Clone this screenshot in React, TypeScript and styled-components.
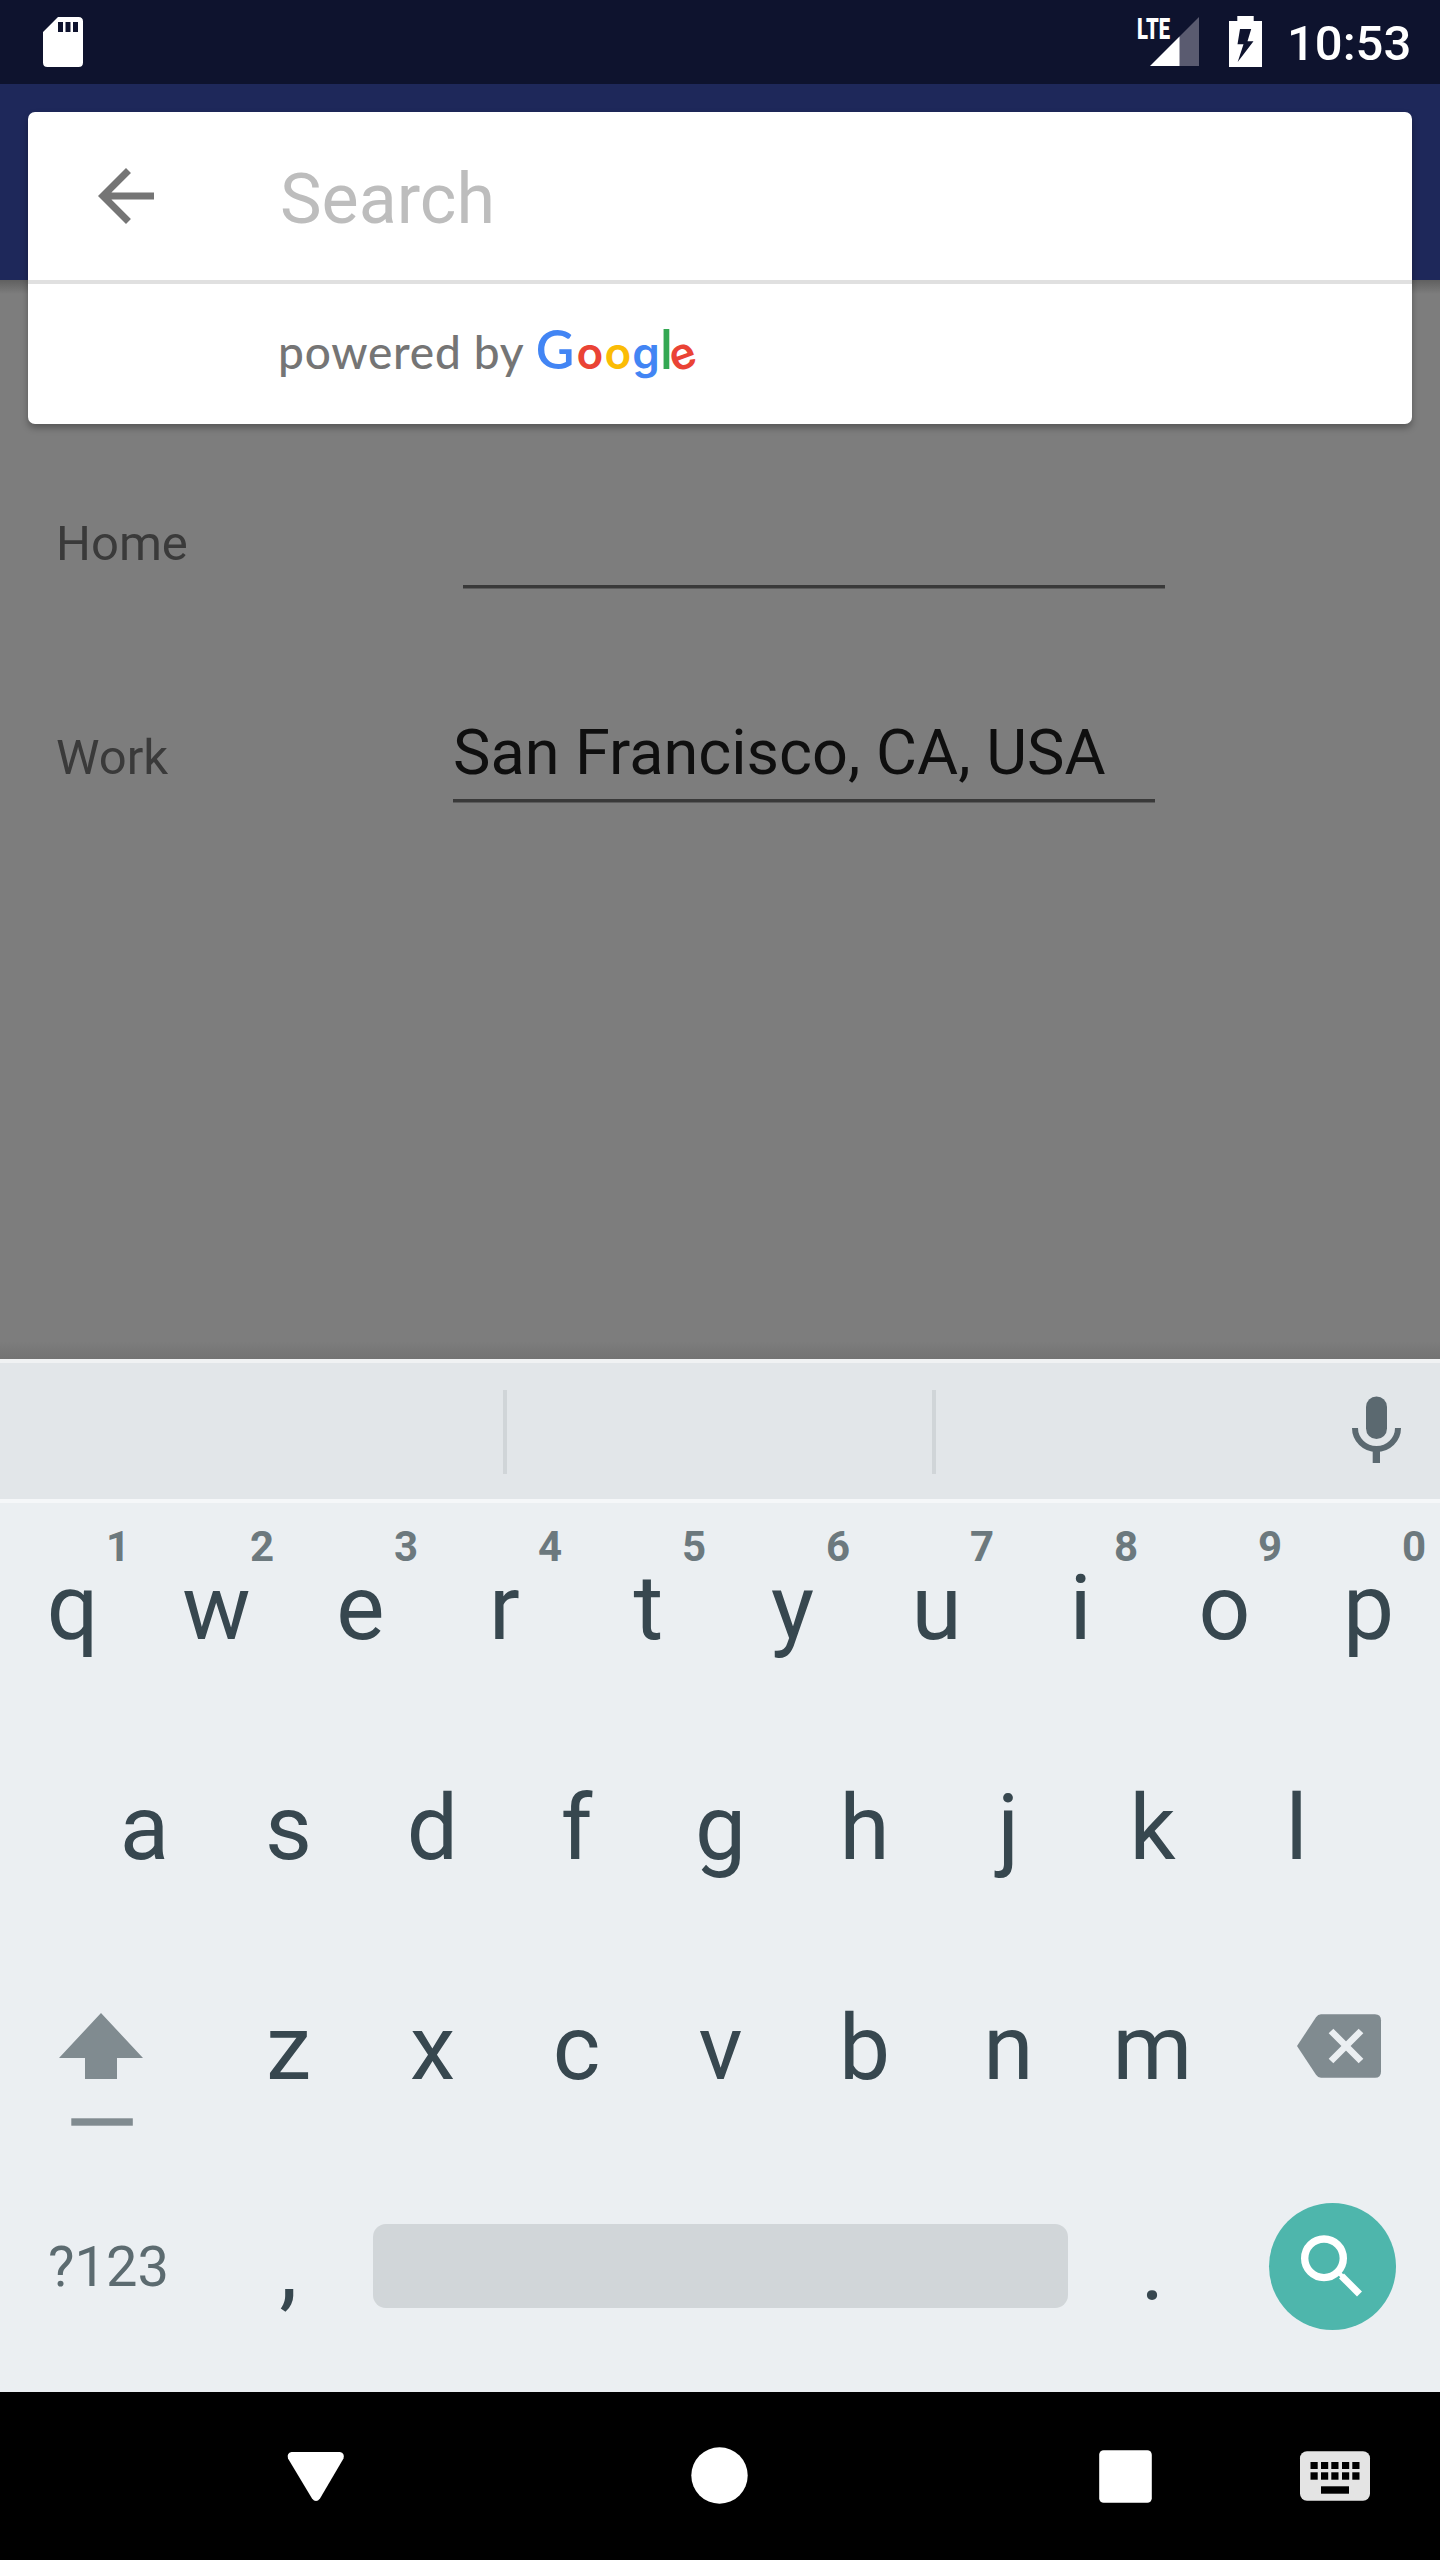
import React from "react";
import styled, { createGlobalStyle } from "styled-components";

const GlobalStyle = createGlobalStyle`
  * { box-sizing: border-box; }
  body { margin: 0; background: #000; font-family: Roboto, "Noto Sans", sans-serif; }
  svg { display: block; flex: none; overflow: visible; }
`;

const Screen = styled.div`
  position: relative;
  width: 1440px;
  height: 2560px;
  display: flex;
  flex-direction: column;
  overflow: hidden;
  background: #7d7d7d;
`;

const StatusBar = styled.header`
  height: 84px;
  flex: none;
  display: flex;
  align-items: flex-start;
  justify-content: space-between;
  padding: 16px 31px 0 43px;
  background: #0e132e;
`;

const StatusIcons = styled.div`
  display: flex;
  gap: 29px;
`;

const Clock = styled.time`
  width: 122px;
  margin: -1px 0 0 -4px;
  font-size: 49px;
  font-weight: 500;
  line-height: 58px;
  text-align: right;
  color: #fff;
`;

const AppBar = styled.div`
  height: 196px;
  flex: none;
  background: #1e285a;
`;

const Form = styled.main`
  flex: 1;
  display: flex;
  flex-direction: column;
  gap: 110px;
  padding: 205px 56px 0;
  background:
    linear-gradient(#606060, rgba(125, 125, 125, 0) 100%) top / 100% 14px no-repeat,
    linear-gradient(rgba(125, 125, 125, 0), #737373) bottom / 100% 18px no-repeat,
    #7d7d7d;
`;

const FormRow = styled.div`
  display: flex;
  align-items: flex-end;
  height: 104px;
`;

const Label = styled.label<{ $width: number }>`
  width: ${(p) => p.$width}px;
  padding-bottom: 16px;
  font-size: 49px;
  line-height: 58px;
  color: #3a3a3a;
`;

const Field = styled.div`
  width: 702px;
  height: 86px;
  margin-bottom: 1px;
  border-bottom: 3px solid #393939;
  box-shadow: 0 1px #5c5c5c;
  font-size: 63px;
  line-height: 74px;
  white-space: nowrap;
  color: #0f0f0f;
`;

const SearchCard = styled.section`
  position: absolute;
  top: 112px;
  left: 28px;
  width: 1384px;
  height: 312px;
  border-radius: 7px;
  background: #fff;
  box-shadow: 0 4px 7px rgba(0, 0, 0, 0.3);
`;

const SearchRow = styled.div`
  display: flex;
  align-items: flex-start;
  height: 172px;
  padding: 42px 56px 0;
  border-bottom: 4px solid #e0e0e0;
`;

const Placeholder = styled.span`
  margin: 4px 0 0 112px;
  font-size: 70px;
  line-height: 82px;
  color: #bdbdbd;
`;

const Attribution = styled.div`
  display: flex;
  align-items: baseline;
  padding: 37px 0 0 250px;
  font-family: Lato, sans-serif;
  font-size: 46px;
  font-weight: 500;
  line-height: 56px;
  color: #757575;
`;

const PoweredBy = styled.span`
  width: 256px;
  letter-spacing: 0.75px;
  white-space: nowrap;
`;

const Brand = styled.span`
  display: inline-flex;
  align-items: baseline;
`;

const BrandLetter = styled.span<{ $color: string; $width: number; $tall?: boolean; $tilt?: number }>`
  width: ${(p) => p.$width}px;
  font-family: ${(p) => (p.$tall ? "Lato" : "Inter")}, sans-serif;
  font-size: ${(p) => (p.$tall ? 53 : 44)}px;
  font-weight: 600;
  text-align: center;
  color: ${(p) => p.$color};
  transform-origin: 50% 60%;
  transform: rotate(${(p) => p.$tilt ?? 0}deg);
`;

const Keyboard = styled.section`
  height: 1033px;
  flex: none;
  display: flex;
  flex-direction: column;
  background: #ebeff2;
`;

const Suggestions = styled.div`
  height: 144px;
  display: flex;
  align-items: flex-start;
  border-top: 4px solid #f0f2f3;
  border-bottom: 4px solid #f5f7f9;
  background: #e2e6e9;
`;

const Suggestion = styled.div<{ $width: number }>`
  width: ${(p) => p.$width}px;
  height: 84px;
  margin-top: 27px;
  border-right: 4px solid #d0d5d8;
`;

const MicSlot = styled.div`
  margin: 33px 0 0 416px;
`;

const KeyRow = styled.div<{ $inset?: number }>`
  height: 220px;
  display: flex;
  padding: 0 ${(p) => p.$inset ?? 0}px;
`;

const Key = styled.div<{ $width?: number }>`
  position: relative;
  width: ${(p) => p.$width ?? 144}px;
  padding: 52px 0 0 1px;
  font-size: 91px;
  line-height: 106px;
  text-align: center;
  color: #37474f;
`;

const Hint = styled.span`
  position: absolute;
  top: 20px;
  left: 98px;
  width: 40px;
  font-size: 42px;
  font-weight: 700;
  line-height: 48px;
  color: #6c797e;
`;

const ShiftKey = styled.div`
  width: 216px;
  padding: 70px 0 0 59px;
`;

const DeleteKey = styled.div`
  padding: 71px 0 0 73px;
`;

const SymbolsKey = styled.div`
  width: 216px;
  padding: 71px 0 0 48px;
  font-size: 56px;
  line-height: 66px;
  color: #5c6b70;
`;

const SpaceBar = styled.div`
  width: 695px;
  height: 84px;
  margin: 61px 12px 0 13px;
  border-radius: 13px;
  background: #d1d6d9;
`;

const EnterKey = styled.div`
  width: 127px;
  height: 127px;
  margin: 40px 0 0 45px;
  border-radius: 50%;
  background: #4eb6ac;
`;

const NavBar = styled.nav`
  height: 168px;
  flex: none;
  display: flex;
  align-items: flex-start;
  padding: 55px 0 0 287px;
  background: #000;
`;

const NavSlot = styled.div<{ $width: number; $drop?: number }>`
  width: ${(p) => p.$width}px;
  padding-top: ${(p) => p.$drop ?? 0}px;
`;

const SdCardIcon = () => (
  <svg width="40" height="52" viewBox="0 0 40 52" fill="#fff">
    <path
      fillRule="evenodd"
      d="M15 1H35.5Q40 1 40 5.500V46.500Q40 51 35.500 51H4.500Q0 51 0 46.500V16ZM15 6V16H20V6ZM22.500 6V16H27.500V6ZM30 6V16H35V6Z"
    />
  </svg>
);

const SignalIcon = () => (
  <svg width="62" height="52" viewBox="0 0 62 52">
    <path d="M61 1V50H41V21Z" fill="#5a5b70" />
    <path d="M12 50L41.500 20.500V50Z" fill="#fff" />
    <text
      x="-1"
      y="23"
      fill="#fff"
      fontFamily="Roboto, sans-serif"
      fontSize="30"
      fontWeight="900"
      textLength="33"
      lengthAdjust="spacingAndGlyphs"
    >
      LTE
    </text>
  </svg>
);

const BatteryIcon = () => (
  <svg width="33" height="52" viewBox="0 0 33 52" fill="#fff">
    <path
      fillRule="evenodd"
      d="M8.300 0H24.700V5H33V51H0V5H8.300ZM11 13L8.500 28.300H14.500L8.700 46L24.500 25.300H18.500L22.200 13Z"
    />
  </svg>
);

const BackArrow = () => (
  <svg width="84" height="84" viewBox="0 0 24 24" fill="#757575">
    <path d="M20 11H7.830l5.590-5.590L12 4l-8 8 8 8 1.410-1.410L7.830 13H20v-2z" />
  </svg>
);

const MicIcon = () => (
  <svg width="50" height="67" viewBox="0 0 50 67" fill="#5b6970">
    <rect x="14" y="0.500" width="21" height="42.500" rx="10.500" />
    <path
      d="M3 32A21.500 21 0 0 0 46 32"
      fill="none"
      stroke="#5b6970"
      strokeWidth="6"
    />
    <rect x="20.700" y="53" width="7.300" height="14" />
  </svg>
);

const ShiftIcon = () => (
  <svg width="84" height="113" viewBox="0 0 84 113" fill="#808b90">
    <path d="M42 0L84 45H58V66H26V45H0Z" />
    <rect x="12.300" y="105.300" width="61.500" height="7.400" />
  </svg>
);

const DeleteIcon = () => (
  <svg width="84" height="64" viewBox="0 0 84 64">
    <path
      d="M24 0.300H78Q84 0.300 84 6.300V57.700Q84 63.700 78 63.700H24Q21 63.700 19 60.700L0 32L19 3.300Q21 0.300 24 0.300Z"
      fill="#808b90"
    />
    <path d="M34 17L64 47M64 17L34 47" stroke="#ebeff2" strokeWidth="6.600" />
  </svg>
);

const SearchIcon = () => (
  <svg width="127" height="127" viewBox="0 0 127 127" fill="none" stroke="#fff">
    <circle cx="55" cy="55.300" r="19.300" strokeWidth="7.400" />
    <path d="M72.500 73L90.500 91" strokeWidth="7" />
    <path d="M67 67L75 75" strokeWidth="4" />
  </svg>
);

const BackIcon = () => (
  <svg width="58" height="50" viewBox="0 0 58 50" fill="#fff">
    <path d="M4.500 0H53Q58 1 56.500 6.500L33 46.500Q29 51.500 25 46.500L1 6.500Q-0.500 1 4.500 0Z" />
  </svg>
);

const HomeIcon = () => (
  <svg width="57" height="57" viewBox="0 0 57 57">
    <circle cx="28.500" cy="28.500" r="28.200" fill="#fff" />
  </svg>
);

const RecentsIcon = () => (
  <svg width="53" height="53" viewBox="0 0 53 53">
    <rect x="0.200" y="0.200" width="52.600" height="52.600" rx="4.500" fill="#fff" />
  </svg>
);

const KeyboardIcon = () => (
  <svg width="70" height="50" viewBox="0 0 70 50">
    <rect x="0" y="0.300" width="70" height="49.400" rx="7" fill="#e4e4e4" />
    {[10.5, 21, 31.3, 42, 52.3].map((x) => (
      <React.Fragment key={x}>
        <rect x={x} y="11" width="7.200" height="7" />
        <rect x={x} y="21.300" width="7.200" height="7.400" />
      </React.Fragment>
    ))}
    <rect x="21" y="35.300" width="28" height="7.400" />
  </svg>
);

const brand = [
  { letter: "G", color: "#4285f4", width: 42, tall: true },
  { letter: "o", color: "#ea4335", width: 28 },
  { letter: "o", color: "#fbbc05", width: 28 },
  { letter: "g", color: "#4285f4", width: 28 },
  { letter: "l", color: "#34a853", width: 10, tall: true },
  { letter: "e", color: "#ea4335", width: 27, tilt: -20 },
];

export default function App() {
  return (
    <>
      <GlobalStyle />
      <Screen>
        <StatusBar>
          <SdCardIcon />
          <StatusIcons>
            <SignalIcon />
            <BatteryIcon />
            <Clock>10:53</Clock>
          </StatusIcons>
        </StatusBar>
        <AppBar />
        <Form>
          <FormRow>
            <Label $width={407}>Home</Label>
            <Field />
          </FormRow>
          <FormRow>
            <Label $width={397}>Work</Label>
            <Field>San Francisco, CA, USA</Field>
          </FormRow>
        </Form>
        <Keyboard>
          <Suggestions>
            <Suggestion $width={507} />
            <Suggestion $width={429} />
            <MicSlot>
              <MicIcon />
            </MicSlot>
          </Suggestions>
          <KeyRow>
            {"qwertyuiop".split("").map((letter, i) => (
              <Key key={letter}>
                {letter}
                <Hint>{(i + 1) % 10}</Hint>
              </Key>
            ))}
          </KeyRow>
          <KeyRow $inset={72}>
            {"asdfghjkl".split("").map((letter) => (
              <Key key={letter}>{letter}</Key>
            ))}
          </KeyRow>
          <KeyRow>
            <ShiftKey>
              <ShiftIcon />
            </ShiftKey>
            {"zxcvbnm".split("").map((letter) => (
              <Key key={letter}>{letter}</Key>
            ))}
            <DeleteKey>
              <DeleteIcon />
            </DeleteKey>
          </KeyRow>
          <KeyRow>
            <SymbolsKey>?123</SymbolsKey>
            <Key>,</Key>
            <SpaceBar />
            <Key>.</Key>
            <EnterKey>
              <SearchIcon />
            </EnterKey>
          </KeyRow>
        </Keyboard>
        <NavBar>
          <NavSlot $width={404} $drop={5}>
            <BackIcon />
          </NavSlot>
          <NavSlot $width={408}>
            <HomeIcon />
          </NavSlot>
          <NavSlot $width={201} $drop={3}>
            <RecentsIcon />
          </NavSlot>
          <NavSlot $width={70} $drop={4}>
            <KeyboardIcon />
          </NavSlot>
        </NavBar>
        <SearchCard>
          <SearchRow>
            <BackArrow />
            <Placeholder>Search</Placeholder>
          </SearchRow>
          <Attribution>
            <PoweredBy>powered by</PoweredBy>
            <Brand>
              {brand.map((b, i) => (
                <BrandLetter key={i} $color={b.color} $width={b.width} $tall={b.tall} $tilt={b.tilt}>
                  {b.letter}
                </BrandLetter>
              ))}
            </Brand>
          </Attribution>
        </SearchCard>
      </Screen>
    </>
  );
}
